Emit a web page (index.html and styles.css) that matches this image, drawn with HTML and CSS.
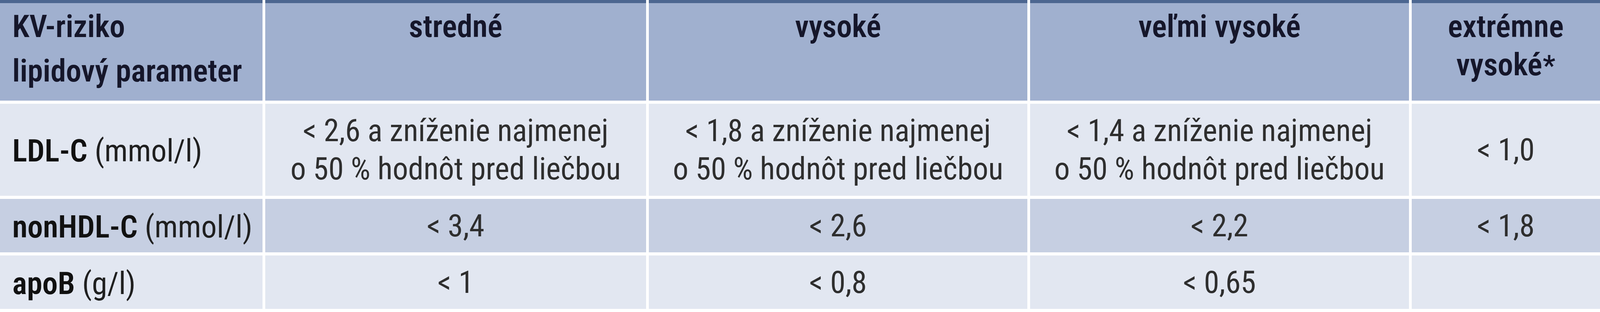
FILE: index.html
```html
<!DOCTYPE html>
<html lang="sk">
<head>
<meta charset="utf-8">
<title>Cieľové hodnoty lipidových parametrov</title>
<link rel="stylesheet" href="styles.css">
</head>
<body>
<table class="lipid">
  <thead>
    <tr>
      <th class="param">KV-riziko<br>lipidový parameter</th>
      <th>stredné</th>
      <th>vysoké</th>
      <th>veľmi vysoké</th>
      <th>extrémne<br>vysoké<sup>*</sup></th>
    </tr>
  </thead>
  <tbody>
    <tr class="light">
      <td class="param"><b>LDL-C</b>&nbsp;(mmol/l)</td>
      <td>&lt; 2,6 a zníženie najmenej<br>o 50 % hodnôt pred liečbou</td>
      <td>&lt; 1,8 a zníženie najmenej<br>o 50 % hodnôt pred liečbou</td>
      <td>&lt; 1,4 a zníženie najmenej<br>o 50 % hodnôt pred liečbou</td>
      <td>&lt; 1,0</td>
    </tr>
    <tr class="dark">
      <td class="param"><b>nonHDL-C</b>&nbsp;(mmol/l)</td>
      <td>&lt; 3,4</td>
      <td>&lt; 2,6</td>
      <td>&lt; 2,2</td>
      <td>&lt; 1,8</td>
    </tr>
    <tr class="light">
      <td class="param"><b>apoB</b>&nbsp;(g/l)</td>
      <td>&lt; 1</td>
      <td>&lt; 0,8</td>
      <td>&lt; 0,65</td>
      <td></td>
    </tr>
  </tbody>
</table>
</body>
</html>
```

FILE: styles.css
```css
/* design units: the table is drawn on a 4960 x 800 grid and stretched to the viewport */
:root {
  --x: calc(100vw / 4960);
  --y: calc(100vh / 800);
  --f: calc(0.5 * var(--x) + 0.5 * var(--y));
}

html, body {
  margin: 0;
  padding: 0;
  background: #ffffff;
  overflow: hidden;
}

.lipid {
  display: grid;
  grid-template-columns:
    calc(814 * var(--x))
    calc(1181 * var(--x))
    calc(1174 * var(--x))
    calc(1175 * var(--x))
    calc(584 * var(--x));
  grid-template-rows:
    calc(258 * var(--y))
    calc(236 * var(--y))
    calc(137 * var(--y))
    calc(137 * var(--y));
  column-gap: calc(8 * var(--x));
  row-gap: calc(8 * var(--y));
  width: 100%;
  border: 0;
  font-family: "Roboto", "Liberation Sans", Arial, sans-serif;
  font-stretch: condensed;
  font-size: calc(87 * var(--f));
  line-height: calc(98 * var(--y));
  color: #2e2e2e;
}

.lipid thead,
.lipid tbody,
.lipid tr {
  display: contents;
}

.lipid th,
.lipid td {
  padding: 0;
  white-space: nowrap;
  box-sizing: border-box;
  text-align: center;
}

.lipid th {
  display: block;
  background: #a0b0cf;
  border-top: calc(8 * var(--y)) solid #4c6690;
  color: #15162a;
  font-weight: 600;
  padding-top: calc(11 * var(--y));
}

.lipid th.param {
  text-align: left;
  padding-left: calc(38 * var(--x));
  line-height: calc(114 * var(--y));
  padding-top: calc(3 * var(--y));
}

.lipid sup {
  font-size: 0.9em;
  line-height: 0;
  vertical-align: baseline;
  margin-left: 0.02em;
}

.lipid td {
  display: flex;
  flex-direction: column;
  align-items: center;
  justify-content: center;
}

.lipid td.param {
  flex-direction: row;
  justify-content: flex-start;
  padding-left: calc(38 * var(--x));
  padding-top: calc(6 * var(--y));
  color: #1f1f1f;
}

.lipid td.param b {
  font-weight: 600;
  color: #111111;
}

.light td { background: #e2e7f1; }
.dark td { background: #c6cfe2; }
```
